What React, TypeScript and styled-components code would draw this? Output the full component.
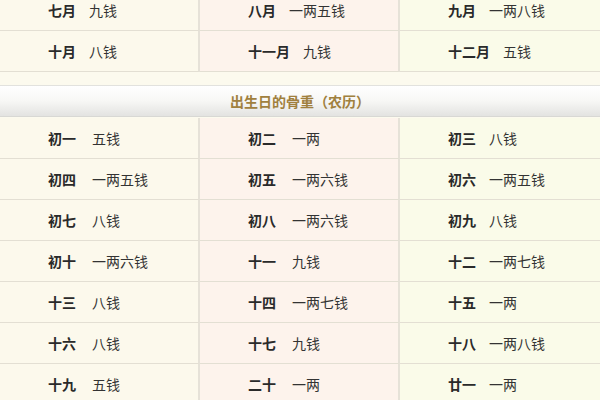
import styled, { createGlobalStyle } from "styled-components";

const GlobalStyle = createGlobalStyle`
  html, body {
    margin: 0;
    padding: 0;
    background: #fcfaee;
    font-family: "Liberation Sans", "Noto Sans CJK SC", sans-serif;
    overflow: hidden;
  }
`;

const monthRows = [
  [["七月", "九钱"], ["八月", "一两五钱"], ["九月", "一两八钱"]],
  [["十月", "八钱"], ["十一月", "九钱"], ["十二月", "五钱"]],
];

const dayRows = [
  [["初一", "五钱"], ["初二", "一两"], ["初三", "八钱"]],
  [["初四", "一两五钱"], ["初五", "一两六钱"], ["初六", "一两五钱"]],
  [["初七", "八钱"], ["初八", "一两六钱"], ["初九", "八钱"]],
  [["初十", "一两六钱"], ["十一", "九钱"], ["十二", "一两七钱"]],
  [["十三", "八钱"], ["十四", "一两七钱"], ["十五", "一两"]],
  [["十六", "八钱"], ["十七", "九钱"], ["十八", "一两八钱"]],
  [["十九", "五钱"], ["二十", "一两"], ["廿一", "一两"]],
];

const colBg = ["#fcf9ec", "#fdf3ec", "#fafbe9"];

export default function App() {
  return (
    <>
      <GlobalStyle />
      <Page>
        <STTable $top>
          {monthRows.map((row, r) =>
            row.map(([label, value], c) => (
              <STCell key={`m${r}${c}`} $bg={colBg[c]} $last={c === 2}>
                <STLabel>{label}</STLabel>
                <STValue $gap={13}>{value}</STValue>
              </STCell>
            ))
          )}
        </STTable>
        <STHeader>出生日的骨重（农历）</STHeader>
        <STTable>
          {dayRows.map((row, r) =>
            row.map(([label, value], c) => (
              <STCell key={`d${r}${c}`} $bg={colBg[c]} $last={c === 2}>
                <STLabel>{label}</STLabel>
                <STValue $gap={c === 2 ? 13 : 16}>{value}</STValue>
              </STCell>
            ))
          )}
        </STTable>
      </Page>
    </>
  );
}

const Page = styled.div`
  width: 600px;
  height: 400px;
  overflow: hidden;
`;

const STTable = styled.div<{ $top?: boolean }>`
  display: grid;
  grid-template-columns: 200px 200px 200px;
  margin-top: ${(p) => (p.$top ? "-10px" : "0")};
  margin-bottom: ${(p) => (p.$top ? "13px" : "0")};
`;

const STCell = styled.div<{ $bg: string; $last: boolean }>`
  display: flex;
  align-items: center;
  height: 40px;
  padding-left: 48px;
  background: ${(p) => p.$bg};
  border-bottom: 1px solid #e3dfd3;
  border-right: ${(p) => (p.$last ? "none" : "2px solid #e6e2d8")};
  font-size: 14px;
  color: #2a2a2a;
`;

const STLabel = styled.span`
  font-weight: 700;
`;

const STValue = styled.span<{ $gap: number }>`
  margin-left: ${(p) => p.$gap}px;
  color: #333;
`;

const STHeader = styled.div`
  height: 30px;
  display: flex;
  align-items: center;
  justify-content: center;
  border-top: 1px solid #e2e2de;
  border-bottom: 1px solid #d8d8d4;
  background: linear-gradient(#ffffff, #f7f7f5 50%, #e3e3e1);
  color: #a0803e;
  font-size: 14px;
  font-weight: 700;
  margin-bottom: 1px;
`;
